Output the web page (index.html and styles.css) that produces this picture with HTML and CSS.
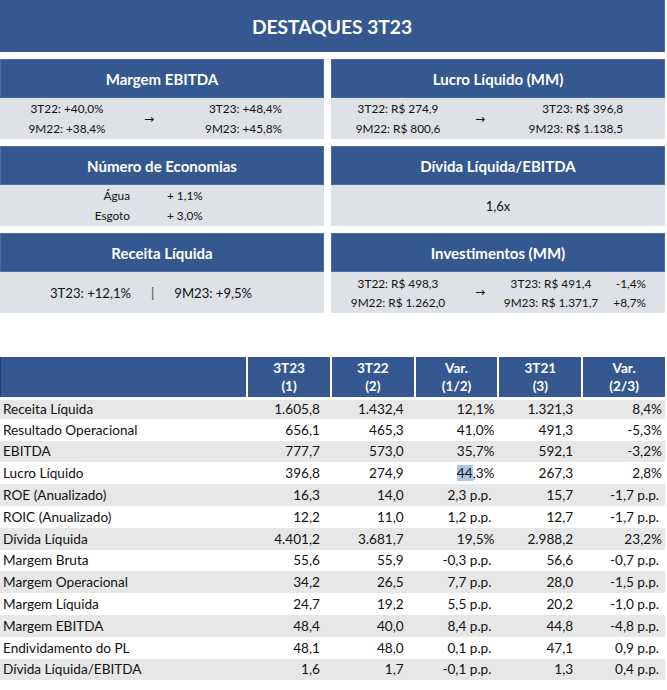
FILE: index.html
```html
<!DOCTYPE html>
<html lang="pt-BR">
<head>
  <meta charset="UTF-8">
  <title>Destaques 3T23</title>
  <link rel="stylesheet" href="styles.css">
</head>
<body>
  <!-- Destaques -->
  <section class="highlights">
    <h1 class="page-title">DESTAQUES 3T23</h1>

    <div class="cards">
      <div class="card">
        <h2 class="card-title">Margem EBITDA</h2>
        <div class="card-body compare">
          <div class="from">3T22: +40,0%<br>9M22: +38,4%</div>
          <div class="arrow">&rarr;</div>
          <div class="to">3T23: +48,4%<br>9M23: +45,8%</div>
        </div>
      </div>

      <div class="card">
        <h2 class="card-title">Lucro Líquido (MM)</h2>
        <div class="card-body compare">
          <div class="from">3T22: R$ 274,9<br>9M22: R$ 800,6</div>
          <div class="arrow">&rarr;</div>
          <div class="to">3T23: R$ 396,8<br>9M23: R$ 1.138,5</div>
        </div>
      </div>

      <div class="card">
        <h2 class="card-title">Número de Economias</h2>
        <div class="card-body economies">
          <span class="eco-label">Água</span><span>+ 1,1%</span>
          <span class="eco-label">Esgoto</span><span>+ 3,0%</span>
        </div>
      </div>

      <div class="card">
        <h2 class="card-title">Dívida Líquida/EBITDA</h2>
        <div class="card-body single">1,6x</div>
      </div>

      <div class="card">
        <h2 class="card-title">Receita Líquida</h2>
        <div class="card-body revenue">
          <span>3T23: +12,1%</span>
          <span class="divider">|</span>
          <span>9M23: +9,5%</span>
        </div>
      </div>

      <div class="card">
        <h2 class="card-title">Investimentos (MM)</h2>
        <div class="card-body compare invest">
          <div class="from">3T22: R$ 498,3<br>9M22: R$ 1.262,0</div>
          <div class="arrow">&rarr;</div>
          <div class="to">3T23: R$ 491,4<br>9M23: R$ 1.371,7</div>
          <div class="delta">-1,4%<br>+8,7%</div>
        </div>
      </div>
    </div>
  </section>

  <!-- Tabela de indicadores -->
  <table class="results">
    <thead>
      <tr>
        <th class="label-col"></th>
        <th>3T23<br>(1)</th>
        <th>3T22<br>(2)</th>
        <th>Var.<br>(1/2)</th>
        <th>3T21<br>(3)</th>
        <th>Var.<br>(2/3)</th>
      </tr>
    </thead>
    <tbody>
      <tr><td>Receita Líquida</td><td>1.605,8</td><td>1.432,4</td><td class="var">12,1%</td><td class="prev">1.321,3</td><td class="var">8,4%</td></tr>
      <tr><td>Resultado Operacional</td><td>656,1</td><td>465,3</td><td class="var">41,0%</td><td class="prev">491,3</td><td class="var">-5,3%</td></tr>
      <tr><td>EBITDA</td><td>777,7</td><td>573,0</td><td class="var">35,7%</td><td class="prev">592,1</td><td class="var">-3,2%</td></tr>
      <tr><td>Lucro Líquido</td><td>396,8</td><td>274,9</td><td class="var"><span class="selected">44</span>,3%</td><td class="prev">267,3</td><td class="var">2,8%</td></tr>
      <tr><td>ROE (Anualizado)</td><td>16,3</td><td>14,0</td><td class="var pp">2,3 p.p.</td><td class="prev">15,7</td><td class="var pp">-1,7 p.p.</td></tr>
      <tr><td>ROIC (Anualizado)</td><td>12,2</td><td>11,0</td><td class="var pp">1,2 p.p.</td><td class="prev">12,7</td><td class="var pp">-1,7 p.p.</td></tr>
      <tr><td>Dívida Líquida</td><td>4.401,2</td><td>3.681,7</td><td class="var">19,5%</td><td class="prev">2.988,2</td><td class="var">23,2%</td></tr>
      <tr><td>Margem Bruta</td><td>55,6</td><td>55,9</td><td class="var pp">-0,3 p.p.</td><td class="prev">56,6</td><td class="var pp">-0,7 p.p.</td></tr>
      <tr><td>Margem Operacional</td><td>34,2</td><td>26,5</td><td class="var pp">7,7 p.p.</td><td class="prev">28,0</td><td class="var pp">-1,5 p.p.</td></tr>
      <tr><td>Margem Líquida</td><td>24,7</td><td>19,2</td><td class="var pp">5,5 p.p.</td><td class="prev">20,2</td><td class="var pp">-1,0 p.p.</td></tr>
      <tr><td>Margem EBITDA</td><td>48,4</td><td>40,0</td><td class="var pp">8,4 p.p.</td><td class="prev">44,8</td><td class="var pp">-4,8 p.p.</td></tr>
      <tr><td>Endividamento do PL</td><td>48,1</td><td>48,0</td><td class="var pp">0,1 p.p.</td><td class="prev">47,1</td><td class="var pp">0,9 p.p.</td></tr>
      <tr><td>Dívida Líquida/EBITDA</td><td>1,6</td><td>1,7</td><td class="var pp">-0,1 p.p.</td><td class="prev">1,3</td><td class="var pp">0,4 p.p.</td></tr>
    </tbody>
  </table>
</body>
</html>
```

FILE: styles.css
```css
/* Global */
:root {
  --blue: #34588f;
  --blue-edge: #4a6da3;
  --card-gray: #dee1e5;
  --row-gray: #e7e7e7;
  --text: #111111;
}

* {
  margin: 0;
  padding: 0;
  box-sizing: border-box;
}

body {
  width: 667px;
  background: white;
  color: var(--text);
  font-family: 'Lato', 'Open Sans', sans-serif;
  font-size: 11.8px;
}

/* Destaques */
.highlights {
  width: 665px;
}

.page-title {
  height: 52px;
  display: flex;
  align-items: center;
  justify-content: center;
  background: var(--blue);
  border-right: 1px solid var(--blue-edge);
  color: white;
  font-size: 19.2px;
  font-weight: 700;
}

.cards {
  display: grid;
  grid-template-columns: 324px 334px;
  column-gap: 7px;
  row-gap: 7px;
  padding-top: 7px;
}

.card-title {
  height: 39px;
  display: flex;
  align-items: center;
  justify-content: center;
  background: var(--blue);
  border: 1px solid var(--blue-edge);
  color: white;
  font-size: 15px;
  font-weight: 700;
}

.card-body {
  height: 41px;
  background: var(--card-gray);
  line-height: 20px;
}

.compare {
  display: grid;
  grid-template-columns: 134px 30px 1fr;
  align-items: center;
}

.compare .from {
  text-align: center;
}

.compare .arrow {
  text-align: center;
  font-size: 12px;
  font-family: 'DejaVu Sans', sans-serif;
}

.compare .to {
  text-align: right;
  padding-right: 42px;
}

.invest {
  grid-template-columns: 134px 30px 112px 1fr;
  line-height: 19px;
}

.invest .to {
  text-align: center;
  padding-right: 0;
}

.invest .delta {
  text-align: right;
  padding-right: 19px;
}

.economies {
  display: grid;
  grid-template-columns: 130px auto;
  column-gap: 37px;
  align-content: center;
}

.eco-label {
  text-align: right;
}

.single {
  display: flex;
  align-items: center;
  justify-content: center;
  font-size: 13px;
}

.revenue {
  display: flex;
  align-items: center;
  padding-left: 50px;
  gap: 20px;
  font-size: 13.1px;
}

.divider {
  color: #4a4a4a;
}

/* Tabela */
.results {
  width: 665px;
  margin-top: 44px;
  border-collapse: separate;
  border-spacing: 0;
  font-size: 13.6px;
}

.results th {
  height: 40px;
  background: var(--blue);
  color: white;
  font-weight: 700;
  line-height: 18px;
  border-left: 2px solid white;
  width: 84px;
}

.results th.label-col {
  width: 247px;
  border-left: 1px solid #22406e;
}

.results tbody tr:first-child td {
  border-top: 3px solid white;
}

.results td {
  height: 21.8px;
  padding: 0 10px 0 0;
  text-align: right;
  white-space: nowrap;
}

.results td:first-child {
  text-align: left;
  padding-left: 3px;
}

.results td.var {
  padding-right: 3px;
}

.results td.var.pp {
  padding-right: 6px;
}

.results td.prev {
  padding-right: 8px;
}

.results tbody tr:nth-child(odd) td {
  background: var(--row-gray);
}

.selected {
  background: #a9c6e6;
}
```
